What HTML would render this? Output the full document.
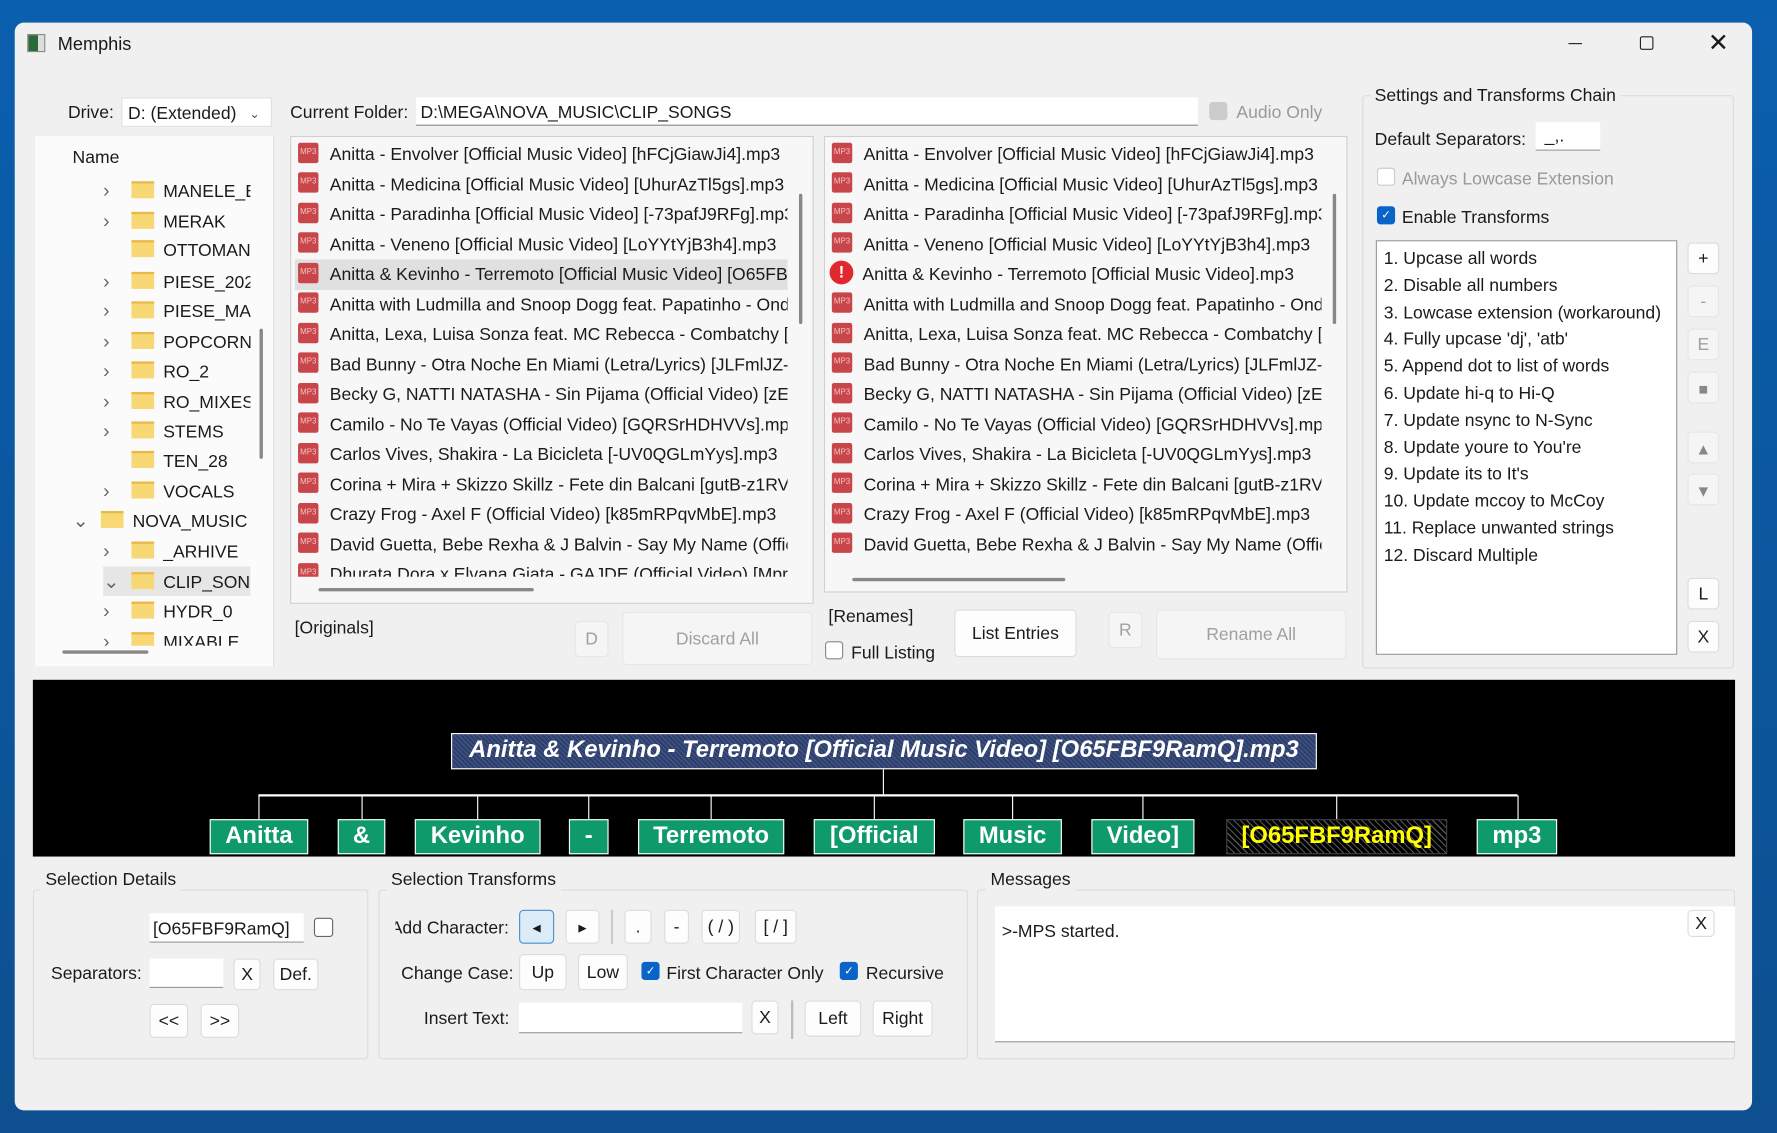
<!DOCTYPE html>
<html><head><meta charset="utf-8"><style>
*{box-sizing:border-box;margin:0;padding:0}
html,body{width:1777px;height:1133px;overflow:hidden;background:#0b5aa3}
body{font-family:"Liberation Sans",sans-serif;color:#1a1a1a}
#s{position:absolute;left:0;top:0;width:1568px;height:1000px;transform:scale(1.13329,1.133);transform-origin:0 0;background:linear-gradient(180deg,#0a5fae,#0d4f8f)}
.a{position:absolute}
.win{left:13px;top:20px;width:1533px;height:960px;background:#f0f0f0;border-radius:8px;overflow:hidden}
.t{position:absolute;font-size:15.5px;white-space:nowrap;line-height:20px;margin-top:2px}
.box{position:absolute;background:#fff;border:1px solid #d8d8d8}
.btn{position:absolute;background:#fdfdfd;border:1px solid #dcdcdc;border-radius:4px;font-size:15.5px;text-align:center;display:flex;align-items:center;justify-content:center;padding-top:2px}
.dis{color:#a0a0a0;background:#f5f5f5;border-color:#e6e6e6}
.grp{position:absolute;border:1px solid #dcdcdc;border-radius:3px}
.lt{position:absolute;font-size:15.5px;background:#f0f0f0;padding:0 4px;white-space:nowrap;margin-top:2px}
.row{position:absolute;height:26.5px;font-size:15.5px;white-space:nowrap;line-height:28px;overflow:hidden}
.mp{display:inline-block;width:18px;height:18px;background:#c8464a;border-radius:2px;color:#f3c0c0;font-size:7px;line-height:18px;text-align:center;vertical-align:middle;margin-right:10px;position:relative;top:-2px}
.ex{display:inline-block;width:21px;height:21px;background:#e0282e;border-radius:50%;color:#fff;font-weight:bold;font-size:15px;line-height:21px;text-align:center;vertical-align:middle;margin-right:8px;position:relative;top:-2px;margin-left:-2px}
.fold{display:inline-block;width:20px;height:15px;background:#f8d775;border-top:2px solid #e9b94a;vertical-align:middle;margin-right:8px;position:relative;top:-2px}
.chev{display:inline-block;width:25px;color:#666;font-size:17px;text-align:left}
.cb{position:absolute;width:16px;height:16px;border:1px solid #888;border-radius:3px;background:#fff}
.cbc{background:#0a64c8;border-color:#0a64c8;color:#fff;font-size:10px;text-align:center;line-height:15px}
.gb{position:absolute;top:723px;height:31px;background:#0f9a6c;border:1px solid #fff;color:#fff;font-weight:bold;font-size:21px;text-align:center;line-height:28px}
.vl{position:absolute;width:1px;background:#fff}
</style></head><body><div id="s">
<div class="a win">
 <div class="a" style="left:11px;top:10px;width:16px;height:16px;border:1px solid #888;background:linear-gradient(90deg,#2a6a3a 0 60%,#ddd 60%)"></div>
 <div class="t" style="left:38px;top:8px;font-size:16px">Memphis</div>
 <div class="a" style="left:1371px;top:18px;width:12px;height:1px;background:#222"></div>
 <div class="a" style="left:1434px;top:12px;width:12px;height:12px;border:1.5px solid #222;border-radius:2px"></div>
 <div class="t" style="left:1494px;top:6px;font-size:22px;font-weight:300">✕</div>

 <div class="t" style="left:47px;top:68px">Drive:</div>
 <div class="box" style="left:94px;top:66px;width:133px;height:26px;border-color:#e0e0e0"><div class="t" style="left:5px;top:2px">D: (Extended)</div><div class="t" style="left:112px;top:2px;font-size:11px;color:#555">&#8964;</div></div>
 <div class="t" style="left:243px;top:68px">Current Folder:</div>
 <div class="box" style="left:354px;top:66px;width:690px;height:25px;border:none;border-bottom:1px solid #888"><div class="t" style="left:4px;top:2px">D:\MEGA\NOVA_MUSIC\CLIP_SONGS</div></div>
 <div class="cb" style="left:1054px;top:70px;background:#ccc;border-color:#ccc"></div>
 <div class="t" style="left:1078px;top:68px;color:#999">Audio Only</div>

 <div class="a" style="left:18px;top:100px;width:211px;height:468px;background:#fbfbfb;border-right:1px solid #ddd;overflow:hidden">
  <div class="t" style="left:33px;top:8px">Name</div>
  <div style="position:absolute;left:0;top:0;width:190px;height:450px;overflow:hidden">
  <div style="position:absolute;left:60px;top:35px;width:130px;overflow:hidden">
   <div class="row" style="position:relative"><span class="chev">&#8250;</span><span class="fold"></span>MANELE_B</div>
   <div class="row" style="position:relative"><span class="chev">&#8250;</span><span class="fold"></span>MERAK</div>
   <div class="row" style="position:relative"><span class="chev"></span><span class="fold"></span>OTTOMAN</div>
   <div class="row" style="position:relative"><span class="chev">&#8250;</span><span class="fold"></span>PIESE_2021</div>
   <div class="row" style="position:relative"><span class="chev">&#8250;</span><span class="fold"></span>PIESE_MAR</div>
   <div class="row" style="position:relative"><span class="chev">&#8250;</span><span class="fold"></span>POPCORN</div>
   <div class="row" style="position:relative"><span class="chev">&#8250;</span><span class="fold"></span>RO_2</div>
   <div class="row" style="position:relative"><span class="chev">&#8250;</span><span class="fold"></span>RO_MIXES</div>
   <div class="row" style="position:relative"><span class="chev">&#8250;</span><span class="fold"></span>STEMS</div>
   <div class="row" style="position:relative"><span class="chev"></span><span class="fold"></span>TEN_28</div>
   <div class="row" style="position:relative"><span class="chev">&#8250;</span><span class="fold"></span>VOCALS</div>
  </div>
  <div class="row" style="left:33px;top:326px;width:160px;height:26px"><span class="chev">&#8964;</span><span class="fold"></span>NOVA_MUSIC</div>
  <div style="position:absolute;left:60px;top:353px;width:130px;overflow:hidden">
   <div class="row" style="position:relative"><span class="chev">&#8250;</span><span class="fold"></span>_ARHIVE</div>
   <div class="row" style="position:relative;background:#e6e6e6"><span class="chev">&#8964;</span><span class="fold"></span>CLIP_SONGS</div>
   <div class="row" style="position:relative"><span class="chev">&#8250;</span><span class="fold"></span>HYDR_0</div>
   <div class="row" style="position:relative"><span class="chev">&#8250;</span><span class="fold"></span>MIXABLE</div>
  </div>
  </div>
  <div class="a" style="left:198px;top:170px;width:3px;height:115px;background:#888;border-radius:2px"></div>
  <div class="a" style="left:24px;top:454px;width:76px;height:3px;background:#888;border-radius:2px"></div>
 </div>

 <div class="a" style="left:243px;top:100px;width:462px;height:413px;border:1px solid #d0d0d0;background:#f7f7f7;overflow:hidden">
  <div style="position:absolute;left:3px;top:2px;width:435px;height:386px;overflow:hidden">
   <div class="row" style="position:relative;padding-left:3px"><span class="mp">MP3</span>Anitta - Envolver [Official Music Video] [hFCjGiawJi4].mp3</div>
   <div class="row" style="position:relative;padding-left:3px"><span class="mp">MP3</span>Anitta - Medicina [Official Music Video] [UhurAzTl5gs].mp3</div>
   <div class="row" style="position:relative;padding-left:3px"><span class="mp">MP3</span>Anitta - Paradinha [Official Music Video] [-73pafJ9RFg].mp3</div>
   <div class="row" style="position:relative;padding-left:3px"><span class="mp">MP3</span>Anitta - Veneno [Official Music Video] [LoYYtYjB3h4].mp3</div>
   <div class="row" style="position:relative;padding-left:3px;background:#e0e0e0"><span class="mp">MP3</span>Anitta &amp; Kevinho - Terremoto [Official Music Video] [O65FBF9RamQ].mp3</div>
   <div class="row" style="position:relative;padding-left:3px"><span class="mp">MP3</span>Anitta with Ludmilla and Snoop Dogg feat. Papatinho - Onda Diferente</div>
   <div class="row" style="position:relative;padding-left:3px"><span class="mp">MP3</span>Anitta, Lexa, Luisa Sonza feat. MC Rebecca - Combatchy [Clipe]</div>
   <div class="row" style="position:relative;padding-left:3px"><span class="mp">MP3</span>Bad Bunny - Otra Noche En Miami (Letra/Lyrics) [JLFmlJZ-</div>
   <div class="row" style="position:relative;padding-left:3px"><span class="mp">MP3</span>Becky G, NATTI NATASHA - Sin Pijama (Official Video) [zEf</div>
   <div class="row" style="position:relative;padding-left:3px"><span class="mp">MP3</span>Camilo - No Te Vayas (Official Video) [GQRSrHDHVVs].mp3</div>
   <div class="row" style="position:relative;padding-left:3px"><span class="mp">MP3</span>Carlos Vives, Shakira - La Bicicleta [-UV0QGLmYys].mp3</div>
   <div class="row" style="position:relative;padding-left:3px"><span class="mp">MP3</span>Corina + Mira + Skizzo Skillz - Fete din Balcani [gutB-z1RV</div>
   <div class="row" style="position:relative;padding-left:3px"><span class="mp">MP3</span>Crazy Frog - Axel F (Official Video) [k85mRPqvMbE].mp3</div>
   <div class="row" style="position:relative;padding-left:3px"><span class="mp">MP3</span>David Guetta, Bebe Rexha &amp; J Balvin - Say My Name (Official</div>
   <div class="row" style="position:relative;padding-left:3px"><span class="mp">MP3</span>Dhurata Dora x Elvana Gjata - GAJDE (Official Video) [Mpr</div>
  </div>
  <div class="a" style="left:448px;top:50px;width:3px;height:115px;background:#888;border-radius:2px"></div>
  <div class="a" style="left:24px;top:398px;width:190px;height:3px;background:#888;border-radius:2px"></div>
 </div>

 <div class="a" style="left:714px;top:100px;width:462px;height:403px;border:1px solid #d0d0d0;background:#f7f7f7;overflow:hidden">
  <div style="position:absolute;left:3px;top:2px;width:435px;height:374px;overflow:hidden">
   <div class="row" style="position:relative;padding-left:3px"><span class="mp">MP3</span>Anitta - Envolver [Official Music Video] [hFCjGiawJi4].mp3</div>
   <div class="row" style="position:relative;padding-left:3px"><span class="mp">MP3</span>Anitta - Medicina [Official Music Video] [UhurAzTl5gs].mp3</div>
   <div class="row" style="position:relative;padding-left:3px"><span class="mp">MP3</span>Anitta - Paradinha [Official Music Video] [-73pafJ9RFg].mp3</div>
   <div class="row" style="position:relative;padding-left:3px"><span class="mp">MP3</span>Anitta - Veneno [Official Music Video] [LoYYtYjB3h4].mp3</div>
   <div class="row" style="position:relative;padding-left:3px"><span class="ex">!</span>Anitta &amp; Kevinho - Terremoto [Official Music Video].mp3</div>
   <div class="row" style="position:relative;padding-left:3px"><span class="mp">MP3</span>Anitta with Ludmilla and Snoop Dogg feat. Papatinho - Onda Diferente</div>
   <div class="row" style="position:relative;padding-left:3px"><span class="mp">MP3</span>Anitta, Lexa, Luisa Sonza feat. MC Rebecca - Combatchy [Clipe]</div>
   <div class="row" style="position:relative;padding-left:3px"><span class="mp">MP3</span>Bad Bunny - Otra Noche En Miami (Letra/Lyrics) [JLFmlJZ-</div>
   <div class="row" style="position:relative;padding-left:3px"><span class="mp">MP3</span>Becky G, NATTI NATASHA - Sin Pijama (Official Video) [zEf</div>
   <div class="row" style="position:relative;padding-left:3px"><span class="mp">MP3</span>Camilo - No Te Vayas (Official Video) [GQRSrHDHVVs].mp3</div>
   <div class="row" style="position:relative;padding-left:3px"><span class="mp">MP3</span>Carlos Vives, Shakira - La Bicicleta [-UV0QGLmYys].mp3</div>
   <div class="row" style="position:relative;padding-left:3px"><span class="mp">MP3</span>Corina + Mira + Skizzo Skillz - Fete din Balcani [gutB-z1RV</div>
   <div class="row" style="position:relative;padding-left:3px"><span class="mp">MP3</span>Crazy Frog - Axel F (Official Video) [k85mRPqvMbE].mp3</div>
   <div class="row" style="position:relative;padding-left:3px"><span class="mp">MP3</span>David Guetta, Bebe Rexha &amp; J Balvin - Say My Name (Official</div>
   <div class="row" style="position:relative;padding-left:3px"><span class="mp">MP3</span>Dhurata</div>
  </div>
  <div class="a" style="left:448px;top:50px;width:3px;height:115px;background:#888;border-radius:2px"></div>
  <div class="a" style="left:24px;top:389px;width:188px;height:3px;background:#888;border-radius:2px"></div>
 </div>

 <div class="t" style="left:247px;top:523px">[Originals]</div>
 <div class="btn dis" style="left:494px;top:528px;width:30px;height:32px">D</div>
 <div class="btn dis" style="left:536px;top:520px;width:168px;height:47px">Discard All</div>
 <div class="t" style="left:718px;top:513px">[Renames]</div>
 <div class="cb" style="left:715px;top:546px"></div>
 <div class="t" style="left:738px;top:545px">Full Listing</div>
 <div class="btn" style="left:829px;top:518px;width:108px;height:42px">List Entries</div>
 <div class="btn dis" style="left:965px;top:520px;width:30px;height:32px">R</div>
 <div class="btn dis" style="left:1007px;top:518px;width:168px;height:44px">Rename All</div>

 <div class="grp" style="left:1189px;top:64px;width:328px;height:506px"></div>
 <div class="lt" style="left:1196px;top:54px">Settings and Transforms Chain</div>
 <div class="t" style="left:1200px;top:92px">Default Separators:</div>
 <div class="box" style="left:1342px;top:88px;width:57px;height:25px;border:none;border-bottom:1px solid #999"><div class="t" style="left:8px;top:1px">_,.</div></div>
 <div class="cb" style="left:1202px;top:128px;border-color:#ccc"></div>
 <div class="t" style="left:1224px;top:127px;color:#999">Always Lowcase Extension</div>
 <div class="cb cbc" style="left:1202px;top:162px">✓</div>
 <div class="t" style="left:1224px;top:161px">Enable Transforms</div>
 <div class="box" style="left:1201px;top:192px;width:266px;height:366px;border-color:#999">
  <div style="position:absolute;left:6px;top:4px;font-size:15.5px;line-height:23.8px;white-space:nowrap">1. Upcase all words<br>2. Disable all numbers<br>3. Lowcase extension (workaround)<br>4. Fully upcase 'dj', 'atb'<br>5. Append dot to list of words<br>6. Update hi-q to Hi-Q<br>7. Update nsync to N-Sync<br>8. Update youre to You're<br>9. Update its to It's<br>10. Update mccoy to McCoy<br>11. Replace unwanted strings<br>12. Discard Multiple</div>
 </div>
 <div class="btn" style="left:1476px;top:194px;width:28px;height:28px">+</div>
 <div class="btn dis" style="left:1476px;top:232px;width:28px;height:28px">-</div>
 <div class="btn dis" style="left:1476px;top:270px;width:28px;height:28px">E</div>
 <div class="btn dis" style="left:1476px;top:308px;width:28px;height:28px;color:#888;font-size:14px">■</div>
 <div class="btn dis" style="left:1476px;top:361px;width:28px;height:28px;color:#888;font-size:14px">▲</div>
 <div class="btn dis" style="left:1476px;top:398px;width:28px;height:28px;color:#888;font-size:14px">▼</div>
 <div class="btn" style="left:1476px;top:490px;width:28px;height:28px">L</div>
 <div class="btn" style="left:1476px;top:528px;width:28px;height:28px">X</div>

 <div class="a" style="left:16px;top:580px;width:1502px;height:156px;background:#000">
  <div class="a" style="left:369px;top:47px;width:764px;height:32px;border:1.5px solid #fff;background:#2c3f6e repeating-linear-gradient(45deg,rgba(255,255,255,.12) 0 1px,transparent 1px 3px);color:#fff;font-weight:bold;font-style:italic;font-size:21px;text-align:center;line-height:28px;white-space:nowrap">Anitta &amp; Kevinho - Terremoto [Official Music Video] [O65FBF9RamQ].mp3</div>
  <div class="vl" style="left:750px;top:79px;height:23px"></div>
  <div class="a" style="left:199px;top:101px;width:1111px;height:2px;background:#fff"></div>
 </div>
 <div class="vl" style="left:215px;top:682px;height:21px"></div>
 <div class="vl" style="left:306px;top:682px;height:21px"></div>
 <div class="vl" style="left:408px;top:682px;height:21px"></div>
 <div class="vl" style="left:506px;top:682px;height:21px"></div>
 <div class="vl" style="left:614px;top:682px;height:21px"></div>
 <div class="vl" style="left:758px;top:682px;height:21px"></div>
 <div class="vl" style="left:880px;top:682px;height:21px"></div>
 <div class="vl" style="left:995px;top:682px;height:21px"></div>
 <div class="vl" style="left:1166px;top:682px;height:21px"></div>
 <div class="vl" style="left:1326px;top:682px;height:21px"></div>
 <div class="gb" style="left:172px;top:703px;width:87px">Anitta</div>
 <div class="gb" style="left:285px;top:703px;width:42px">&amp;</div>
 <div class="gb" style="left:353px;top:703px;width:111px">Kevinho</div>
 <div class="gb" style="left:489px;top:703px;width:35px">-</div>
 <div class="gb" style="left:550px;top:703px;width:129px">Terremoto</div>
 <div class="gb" style="left:705px;top:703px;width:107px">[Official</div>
 <div class="gb" style="left:837px;top:703px;width:87px">Music</div>
 <div class="gb" style="left:950px;top:703px;width:91px">Video]</div>
 <div class="gb" style="left:1069px;top:703px;width:195px;background:repeating-linear-gradient(45deg,#555 0 1px,#000 1px 4px),#000;border-color:#444;color:#ff0">[O65FBF9RamQ]</div>
 <div class="gb" style="left:1290px;top:703px;width:71px">mp3</div>

 <div class="grp" style="left:16px;top:765px;width:296px;height:150px"></div>
 <div class="lt" style="left:23px;top:746px">Selection Details</div>
 <div class="box" style="left:119px;top:786px;width:136px;height:26px;border:none;border-bottom:1px solid #999"><div class="t" style="left:3px;top:3px">[O65FBF9RamQ]</div></div>
 <div class="cb" style="left:264px;top:790px;border-color:#666;width:17px;height:17px"></div>
 <div class="t" style="left:32px;top:828px">Separators:</div>
 <div class="box" style="left:119px;top:826px;width:65px;height:26px;border:none;border-bottom:1px solid #999"></div>
 <div class="btn" style="left:193px;top:826px;width:24px;height:28px">X</div>
 <div class="btn" style="left:228px;top:826px;width:40px;height:28px">Def.</div>
 <div class="btn" style="left:119px;top:866px;width:34px;height:30px">&lt;&lt;</div>
 <div class="btn" style="left:164px;top:866px;width:34px;height:30px">&gt;&gt;</div>

 <div class="grp" style="left:321px;top:765px;width:520px;height:150px"></div>
 <div class="lt" style="left:328px;top:746px">Selection Transforms</div>
 <div class="a" style="left:336px;top:788px;width:100px;height:24px;overflow:hidden"><div class="t" style="right:0;top:0">Add Character:</div></div>
 <div class="btn" style="left:445px;top:783px;width:31px;height:30px;background:#dcebf8;border-color:#4a90d0;font-size:12px">◄</div>
 <div class="btn" style="left:486px;top:783px;width:30px;height:30px;font-size:12px">►</div>
 <div class="a" style="left:526px;top:783px;width:2px;height:30px;background:#ccc"></div>
 <div class="btn" style="left:538px;top:783px;width:24px;height:30px">.</div>
 <div class="btn" style="left:573px;top:783px;width:22px;height:30px">-</div>
 <div class="btn" style="left:606px;top:783px;width:34px;height:30px">( / )</div>
 <div class="btn" style="left:653px;top:783px;width:37px;height:30px">[ / ]</div>
 <div class="t" style="left:341px;top:828px">Change Case:</div>
 <div class="btn" style="left:445px;top:822px;width:42px;height:32px">Up</div>
 <div class="btn" style="left:497px;top:822px;width:44px;height:32px">Low</div>
 <div class="cb cbc" style="left:553px;top:829px">✓</div>
 <div class="t" style="left:575px;top:828px">First Character Only</div>
 <div class="cb cbc" style="left:728px;top:829px">✓</div>
 <div class="t" style="left:751px;top:828px">Recursive</div>
 <div class="t" style="left:361px;top:868px">Insert Text:</div>
 <div class="box" style="left:445px;top:865px;width:197px;height:27px;border:none;border-bottom:1px solid #999"></div>
 <div class="btn" style="left:650px;top:863px;width:24px;height:30px">X</div>
 <div class="a" style="left:685px;top:863px;width:2px;height:34px;background:#bbb"></div>
 <div class="btn" style="left:697px;top:863px;width:50px;height:32px">Left</div>
 <div class="btn" style="left:757px;top:863px;width:53px;height:32px">Right</div>

 <div class="grp" style="left:849px;top:765px;width:669px;height:150px"></div>
 <div class="lt" style="left:857px;top:746px">Messages</div>
 <div class="box" style="left:865px;top:780px;width:653px;height:120px;border:none;border-bottom:1px solid #999"><div class="t" style="left:6px;top:11px">&gt;-MPS started.</div></div>
 <div class="btn" style="left:1476px;top:783px;width:24px;height:24px">X</div>
</div>
</div></body></html>
